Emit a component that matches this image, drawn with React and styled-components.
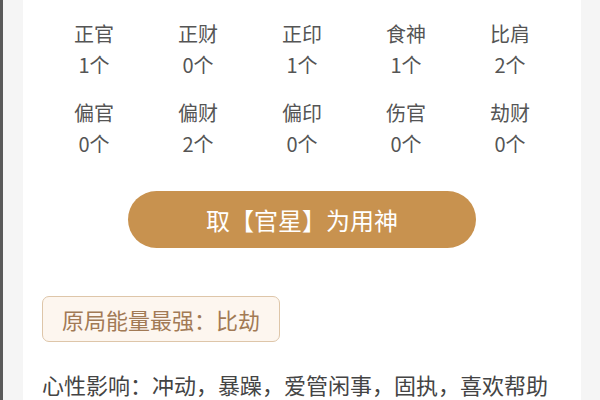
import React from "react";
import styled, { createGlobalStyle } from "styled-components";

const GlobalStyle = createGlobalStyle`
  html, body {
    margin: 0;
    padding: 0;
    background: #f4f4f4;
    font-family: "Noto Sans CJK SC", "Noto Sans", sans-serif;
  }
`;

const gods = [
  { name: "正官", count: 1 },
  { name: "正财", count: 0 },
  { name: "正印", count: 1 },
  { name: "食神", count: 1 },
  { name: "比肩", count: 2 },
  { name: "偏官", count: 0 },
  { name: "偏财", count: 2 },
  { name: "偏印", count: 0 },
  { name: "伤官", count: 0 },
  { name: "劫财", count: 0 },
];

function App() {
  return (
    <>
      <GlobalStyle />
      <Page>
        <Card>
          <Grid>
            {gods.map((g) => (
              <Item key={g.name}>
                <span>{g.name}</span>
                <span>{g.count}个</span>
              </Item>
            ))}
          </Grid>
          <Action>取【官星】为用神</Action>
          <Badge>原局能量最强：比劫</Badge>
          <Desc>心性影响：冲动，暴躁，爱管闲事，固执，喜欢帮助</Desc>
        </Card>
      </Page>
    </>
  );
}

const Page = styled.div`
  height: 400px;
  overflow: hidden;
  padding: 0 19px 0 20px;
  border-left: 3px solid #5a5a5a;
  box-sizing: border-box;
  width: 600px;
  background: #f5f5f5;
`;

const Card = styled.div`
  background: #fff;
  height: 100%;
  padding: 18px 19px 0 19px;
  box-sizing: border-box;
  display: flex;
  flex-direction: column;
  align-items: flex-start;
`;

const Grid = styled.div`
  align-self: stretch;
  display: grid;
  grid-template-columns: repeat(5, 1fr);
  row-gap: 17px;
`;

const Item = styled.div`
  display: flex;
  flex-direction: column;
  align-items: center;
  font-size: 20px;
  line-height: 31px;
  color: #555;
`;

const Action = styled.div`
  align-self: center;
  margin-top: 32px;
  width: 348px;
  height: 57px;
  border-radius: 29px;
  background: #c8924f;
  color: #fff;
  font-size: 24px;
  display: flex;
  align-items: center;
  justify-content: center;
`;

const Badge = styled.div`
  margin-top: 48px;
  height: 46px;
  padding: 0 19px;
  box-sizing: border-box;
  display: flex;
  align-items: center;
  border: 1.5px solid #dec6a9;
  border-radius: 7px;
  background: #fdf6ef;
  color: #a27a55;
  font-size: 22px;
`;

const Desc = styled.div`
  margin-top: 27px;
  font-size: 22px;
  line-height: 30px;
  color: #444;
  white-space: nowrap;
`;

export default App;
